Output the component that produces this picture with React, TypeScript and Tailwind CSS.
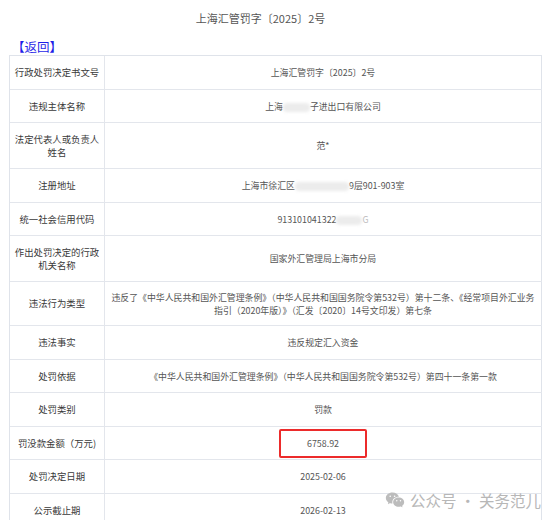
import { RiWechatFill } from 'react-icons/ri'

type Row = {
  label: React.ReactNode
  value: React.ReactNode
  h: string
}

const rows: Row[] = [
  { label: '行政处罚决定书文号', value: '上海汇管罚字〔2025〕2号', h: 'h-[34px]' },
  {
    label: '违规主体名称',
    value: (
      <>
        上海
        <span className="inline-block h-[9px] w-[27px] rounded-sm bg-[#ececec] align-middle blur-[1.5px]" />
        子进出口有限公司
      </>
    ),
    h: 'h-[33px]',
  },
  {
    label: (
      <>
        法定代表人或负责人
        <br />
        姓名
      </>
    ),
    value: '范*',
    h: 'h-[46px]',
  },
  {
    label: '注册地址',
    value: (
      <>
        上海市徐汇区
        <span className="inline-block h-[9px] w-[54px] rounded-sm bg-[#ececec] align-middle blur-[1.5px]" />
        9层901-903室
      </>
    ),
    h: 'h-[34px]',
  },
  {
    label: '统一社会信用代码',
    value: (
      <>
        913101041322
        <span className="inline-block h-[9px] w-[26px] rounded-sm bg-[#ececec] align-middle blur-[1.5px]" />
        <span className="text-[#bbb]">G</span>
      </>
    ),
    h: 'h-[33px]',
  },
  {
    label: (
      <>
        作出处罚决定的行政
        <br />
        机关名称
      </>
    ),
    value: '国家外汇管理局上海市分局',
    h: 'h-[46px]',
  },
  {
    label: '违法行为类型',
    value: (
      <>
        <span className="whitespace-nowrap">
          违反了《中华人民共和国外汇管理条例》（中华人民共和国国务院令第532号）第十二条、《经常项目外汇业务
        </span>
        <br />
        指引（2020年版）》（汇发〔2020〕14号文印发）第七条
      </>
    ),
    h: 'h-[44px]',
  },
  { label: '违法事实', value: '违反规定汇入资金', h: 'h-[34px]' },
  {
    label: '处罚依据',
    value: '《中华人民共和国外汇管理条例》（中华人民共和国国务院令第532号）第四十一条第一款',
    h: 'h-[33px]',
  },
  { label: '处罚类别', value: '罚款', h: 'h-[34px]' },
  {
    label: '罚没款金额（万元)',
    value: (
      <span className="flex h-[29px] w-[88px] items-center justify-center rounded-[2px] border-2 border-[#ec2b2b]">
        6758.92
      </span>
    ),
    h: 'h-[33px]',
  },
  { label: '处罚决定日期', value: '2025-02-06', h: 'h-[34px]' },
  { label: '公示截止期', value: '2026-02-13', h: 'h-[34px]' },
]

export default function App() {
  return (
    <div
      className="relative h-[520px] w-[553px] overflow-hidden bg-white"
      style={{ fontFamily: '"Noto Sans CJK SC", "Microsoft YaHei", sans-serif' }}
    >
      <div className="flex h-[37px] items-center justify-center pr-[32px] text-[11px] text-[#555]">
        上海汇管罚字〔2025〕2号
      </div>
      <div className="flex h-[18px] items-end pl-[12px] text-[12.5px] leading-[16px] text-[#1f1fe8]">
        【返回】
      </div>
      <div className="ml-[9px] w-[533px] border-t border-l border-[#dfe3ea]">
        {rows.map((r, i) => (
          <div key={i} className={`flex ${r.h} border-b border-[#e3e6ec]`}>
            <div className="flex w-[95px] shrink-0 items-center justify-center border-r border-[#e3e6ec] text-center text-[9.4px] leading-[13px] text-[#3a3a3a]">
              <span>{r.label}</span>
            </div>
            <div className="flex flex-1 items-center justify-center border-r border-[#dfe3ea] px-[2px] text-center text-[8.9px] leading-[13px] text-[#555]">
              <span className="flex flex-col items-center">
                <span>{r.value}</span>
              </span>
            </div>
          </div>
        ))}
      </div>
      <div className="absolute top-[490px] left-[385px] flex items-center gap-[5px] text-[15.5px] leading-[20px] text-[#b7b7b7]">
        <RiWechatFill className="h-[20px] w-[20px] text-[#bcbcbc]" />
        <span>公众号 · 关务范儿</span>
      </div>
    </div>
  )
}
